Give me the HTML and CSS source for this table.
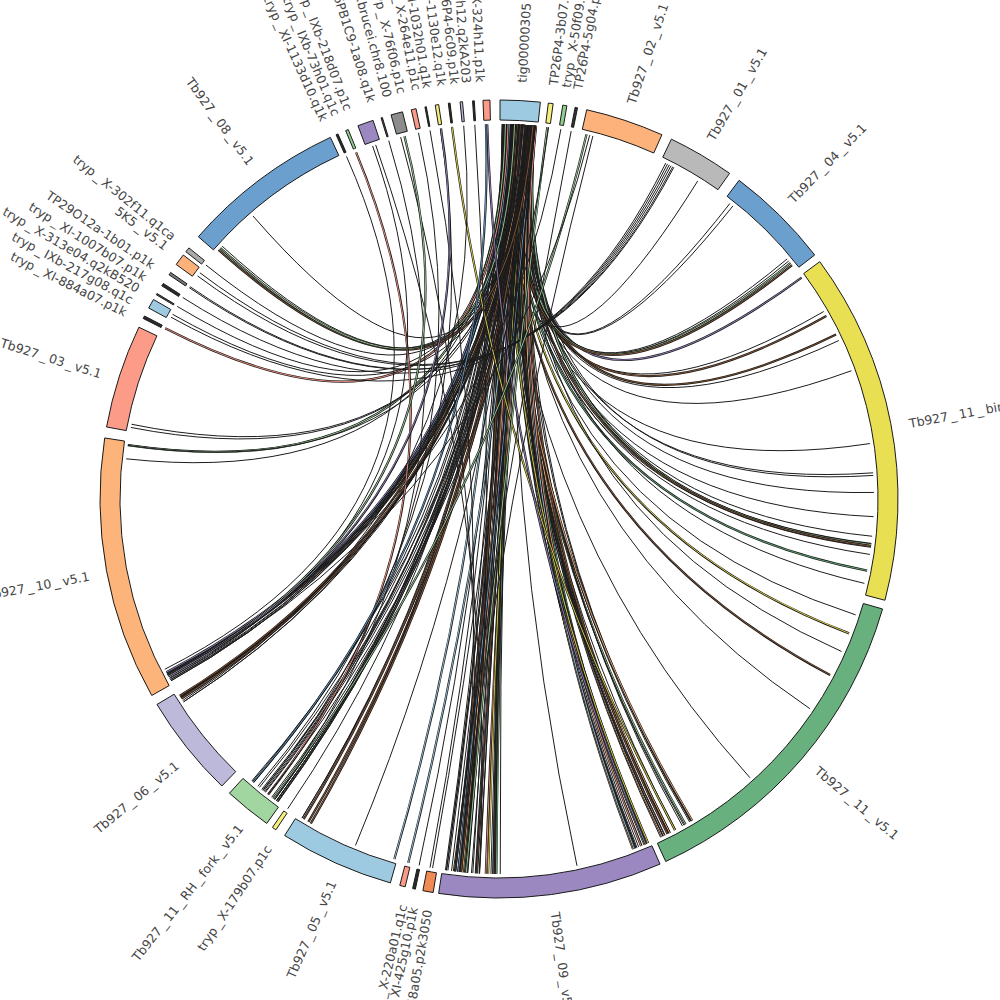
FILE: index.html
```html
<!DOCTYPE html>
<html>
<head>
<meta charset="utf-8">
<title>Circos</title>
<link rel="stylesheet" href="styles.css">
</head>
<body>
<svg id="chart" class="chart" width="1000" height="1000" viewBox="0 0 1000 1000" xmlns="http://www.w3.org/2000/svg">
  <g id="links"></g>
  <g id="segs"></g>
  <g id="labels"></g>
</svg>
<script src="script.js"></script>
</body>
</html>
```

FILE: styles.css
```css
html, body {
  margin: 0;
  padding: 0;
  background: #ffffff;
}
.chart {
  display: block;
}
.seg {
  stroke: #1a1a1a;
  stroke-width: 1;
  stroke-linejoin: miter;
}
.lbl {
  font-family: "DejaVu Sans", "Liberation Sans", sans-serif;
  font-size: 12.5px;
  fill: #454545;
}
.lk {
  fill: none;
  stroke: #1c1c1c;
  stroke-width: 1;
}
.lk-rib {
  fill: none;
  stroke: #151515;
  stroke-width: 2.2;
}
.lk-in {
  fill: none;
  stroke-width: 0.9;
}
```

FILE: script.js
```js
(function () {
  var NS = 'http://www.w3.org/2000/svg';
  var cx = 499, cy = 499, RO = 399, RI = 379, RL = 375, RT = 417;
  function pt(a, r) {
    var t = a * Math.PI / 180;
    return [cx + r * Math.sin(t), cy - r * Math.cos(t)];
  }
  function f(n) { return n.toFixed(2); }
  function el(tag, attrs, parent) {
    var e = document.createElementNS(NS, tag);
    for (var k in attrs) e.setAttribute(k, attrs[k]);
    parent.appendChild(e);
    return e;
  }
  var gL = document.getElementById('links');
  var gS = document.getElementById('segs');
  var gT = document.getElementById('labels');

  var segs = [
    [0.15, 5.95, '#9ecae1'], [7.1, 7.8, '#f7ef7c'], [9.2, 9.8, '#90d08e'], [11.0, 11.35, '#333333'],
    [12.7, 24.1, '#fdb27b'], [25.6, 35.3, '#b9b9b9'], [37.0, 52.3, '#6b9fcd'], [53.5, 104.7, '#e9df52'],
    [106.0, 155.3, '#69b07f'], [156.2, 188.7, '#9b88c1'], [189.5, 191.0, '#f08a55'], [192.1, 192.5, '#2a2a2a'],
    [193.6, 194.4, '#fb9a86'], [195.8, 212.5, '#9ecae1'], [214.0, 214.6, '#f7ef7c'], [215.6, 222.5, '#a1d6a0'],
    [224.0, 239.0, '#bcb9da'], [240.5, 278.8, '#fdb47b'], [280.4, 295.5, '#fb9b88'], [296.9, 297.3, '#2a2a2a'],
    [298.6, 300.0, '#9ecae1'], [300.8, 301.0, '#555555'], [302.3, 302.7, '#2a2a2a'], [304.2, 304.6, '#777777'],
    [306.0, 307.7, '#fdb27b'], [308.3, 309.0, '#aaaaaa'], [311.1, 335.0, '#6b9fcd'], [335.9, 336.2, '#2a2a2a'],
    [337.4, 337.8, '#90d08e'], [339.3, 341.6, '#9b88c1'], [342.8, 343.0, '#6b4a3a'], [344.3, 346.0, '#8c8c8c'],
    [347.3, 348.0, '#fb9a86'], [349.3, 349.5, '#2a2a2a'], [350.8, 351.3, '#f7ef7c'], [352.7, 352.95, '#2a2a2a'],
    [354.4, 354.75, '#bcb9da'], [356.2, 356.45, '#2a2a2a'], [357.7, 358.7, '#fb9a86']
  ];

  var labels = [
    [3.1, 'tig00000305'], [7.4, 'TP26P4-3b07.p1k'], [9.2, 'tryp_X-50f09.q1k'], [10.8, 'TP26P4-5g04.p1k'],
    [18.4, 'Tb927_02_v5.1'], [30.4, 'Tb927_01_v5.1'], [44.3, 'Tb927_04_v5.1'], [79.5, 'Tb927_11_bin_v5.1'],
    [130.3, 'Tb927_11_v5.1'], [172.2, 'Tb927_09_v5.1'],
    [189.9, 'TP26P4-68a05.p2k3050'], [191.9, 'tryp_XI-425g10.p1k'], [193.4, 'tryp_X-220a01.q1c'],
    [203.6, 'Tb927_05_v5.1'], [213.6, 'tryp_X-179b07.p1c'], [218.4, 'Tb927_11_RH_fork_v5.1'],
    [230.6, 'Tb927_06_v5.1'], [259.4, 'Tb927_10_v5.1'], [287.5, 'Tb927_03_v5.1'],
    [296.6, 'tryp_XI-884a07.p1k'], [298.5, 'tryp_IXb-217g08.q1c'], [300.3, 'tryp_X-313e04.q2kB520'],
    [302.1, 'tryp_XI-1007b07.p1k'], [304.1, 'TP29O12a-1b01.p1k'], [307.2, '5K5_v5.1'],
    [308.9, 'tryp_X-302f11.q1ca'], [323.6, 'Tb927_08_v5.1'],
    [335.3, 'tryp_XI-1133d10.q1k'], [337.1, 'tryp_IXb-73h01.q1c'], [338.9, 'tryp_IXb-218d07.p1c'],
    [342.3, 'TP26PB1C9-1a08.q1k'], [344.6, 'T.brucei.chr8.100'], [346.6, 'tryp_X-76f06.p1c'],
    [348.7, 'tryp_X-264e11.p1c'], [350.2, 'tryp_XI-1032h01.q1k'], [352.2, 'tryp_XI-1130e12.q1k'],
    [354.0, 'TP26P4-6c09.p1k'], [355.6, 'TP26P4-2h12.q2kA203'], [357.5, 'tryp_X-324h11.p1k']
  ];

  // seeded random
  var seed = 12345;
  function rnd() {
    seed |= 0; seed = seed + 0x6D2B79F5 | 0;
    var t = Math.imul(seed ^ seed >>> 15, 1 | seed);
    t = t + Math.imul(t ^ t >>> 7, 61 | t) ^ t;
    return ((t ^ t >>> 14) >>> 0) / 4294967296;
  }
  function T() { return 0.5 + rnd() * 5.2; }
  var links = [];
  function add(s, d) { links.push([s, d]); }
  function many(a0, a1, n) { for (var i = 0; i < n; i++) add(T(), a0 + rnd() * (a1 - a0)); }

  [53.8, 60, 60.8, 64, 65, 70, 81.5, 86, 86.4, 89, 92.7, 95.7, 96.8, 97.0, 97.2, 97.4, 98.5, 101, 103].forEach(function (d) { add(T(), d); });
  [38, 38.6, 50.2, 50.6, 51, 51.4].forEach(function (d) { add(T(), d); });
  add(T(), 32);
  [108, 111, 114, 118, 124, 138].forEach(function (d) { add(T(), d); });
  many(149, 154.6, 20);
  many(156.5, 159.2, 16);
  add(T(), 168);
  many(179.8, 188.3, 36);
  [190.2, 190.6, 192.3, 194].forEach(function (d) { add(T(), d); });
  [196.2, 202.5].forEach(function (d) { add(T(), d); });
  many(209.8, 211.8, 6);
  add(T(), 214.3);
  many(216.0, 221.6, 17);
  many(236.9, 238.6, 6);
  many(240.8, 242.6, 12);
  many(275.8, 278.4, 4);
  [281, 281.5].forEach(function (d) { add(T(), d); });
  [297.1, 299.5, 300.9, 308.6].forEach(function (d) { add(T(), d); });
  // Tb927_01 left end to the small contigs on the left
  [[26.4, 299.0], [26.7, 302.5], [27.0, 304.3], [27.3, 304.5], [27.6, 306.5], [27.8, 307.1]].forEach(function (p) { add(p[0], p[1]); });
  [311.6, 312, 312.4, 319].forEach(function (d) { add(T(), d); });
  // small contigs at the top to distant places
  [[336, 243], [337.6, 218], [340.3, 241.5], [340.8, 183], [342.9, 217], [344.8, 185], [345.4, 242],
   [347.6, 219], [349.4, 186], [351, 220], [351.1, 241.8], [352.8, 152], [354.6, 237.5], [356.3, 184],
   [358.2, 157], [358.0, 221], [7.4, 185], [7.6, 218], [9.5, 242], [11.1, 187],
   [13.5, 217], [14.0, 241.2], [14.5, 186]].forEach(function (p) { add(p[0], p[1]); });

  var pal = ['#e9df52', '#69b07f', '#9b88c1', '#fdb27b', '#6b9fcd', '#9ecae1', '#fb9b88', '#8c5a3c', '#a1d6a0', '#7a5230'];
  links.forEach(function (l) {
    var p0 = pt(l[0], RL), p1 = pt(l[1], RL);
    var d = 'M' + f(p0[0]) + ' ' + f(p0[1]) + ' Q' + cx + ' ' + cy + ' ' + f(p1[0]) + ' ' + f(p1[1]);
    if (rnd() < 0.3) {
      el('path', { d: d, 'class': 'lk-rib' }, gL);
      el('path', { d: d, 'class': 'lk-in', stroke: pal[Math.floor(rnd() * pal.length)] }, gL);
    } else {
      el('path', { d: d, 'class': 'lk' }, gL);
    }
  });

  segs.forEach(function (s) {
    var a0 = s[0], a1 = s[1];
    var p1 = pt(a0, RO), p2 = pt(a1, RO), p3 = pt(a1, RI), p4 = pt(a0, RI);
    var lg = (a1 - a0) > 180 ? 1 : 0;
    var d = 'M' + f(p1[0]) + ' ' + f(p1[1]) +
      ' A' + RO + ' ' + RO + ' 0 ' + lg + ' 1 ' + f(p2[0]) + ' ' + f(p2[1]) +
      ' L' + f(p3[0]) + ' ' + f(p3[1]) +
      ' A' + RI + ' ' + RI + ' 0 ' + lg + ' 0 ' + f(p4[0]) + ' ' + f(p4[1]) + ' Z';
    el('path', { d: d, 'class': 'seg', fill: s[2] }, gS);
  });

  // label text with a little extra room around underscores, as in the original rendering
  function fill(t, s) {
    var parts = s.split('_');
    parts.forEach(function (p, i) {
      if (i > 0) {
        var u = el('tspan', { dx: '2.5' }, t);
        u.textContent = '_';
      }
      if (p.length) {
        var a = el('tspan', i > 0 ? { dx: '2.5' } : {}, t);
        a.textContent = p;
      }
    });
  }

  labels.forEach(function (l) {
    var a = l[0], t;
    if (a < 180) {
      t = el('text', { x: cx + RT, y: cy, 'class': 'lbl', 'text-anchor': 'start', 'dominant-baseline': 'central',
        transform: 'rotate(' + f(a - 90) + ' ' + cx + ' ' + cy + ')' }, gT);
    } else {
      t = el('text', { x: cx - RT, y: cy, 'class': 'lbl', 'text-anchor': 'end', 'dominant-baseline': 'central',
        transform: 'rotate(' + f(a + 90) + ' ' + cx + ' ' + cy + ')' }, gT);
    }
    fill(t, l[1]);
  });
})();
```
